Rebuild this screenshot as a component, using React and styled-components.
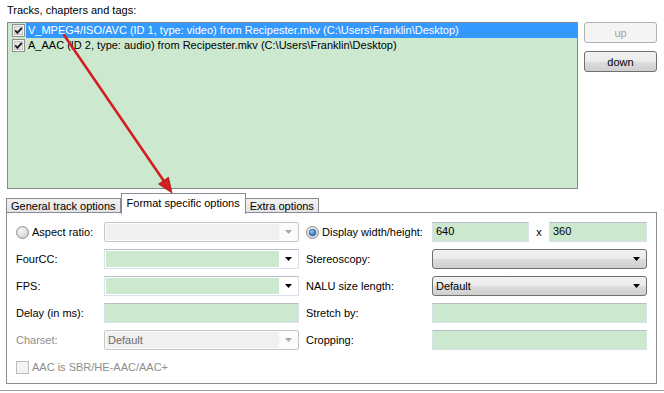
import React from "react";
import styled, { createGlobalStyle } from "styled-components";

const GlobalStyle = createGlobalStyle`
  body {
    margin: 0;
    background: #ffffff;
    font-family: "Liberation Sans", Arial, sans-serif;
    font-size: 11px;
    color: #000;
  }
`;

const tracks = [
  {
    text: "V_MPEG4/ISO/AVC (ID 1, type: video) from Recipester.mkv (C:\\Users\\Franklin\\Desktop)",
    selected: true,
  },
  {
    text: "A_AAC (ID 2, type: audio) from Recipester.mkv (C:\\Users\\Franklin\\Desktop)",
    selected: false,
  },
];

function CheckMark() {
  return (
    <svg width="13" height="13" viewBox="0 0 13 13">
      <rect x="0.5" y="0.5" width="12" height="12" fill="#f4f4f4" stroke="#8e8f8f" />
      <rect x="2.5" y="2.5" width="8" height="8" fill="#e6e6e6" stroke="#c4c4c4" />
      <path d="M3.2 6.4 L5.4 8.8 L9.8 3.8" fill="none" stroke="#1a1a1a" strokeWidth="1.8" />
    </svg>
  );
}

function DownArrow({ color = "#000" }) {
  return (
    <svg width="7" height="4" viewBox="0 0 7 4">
      <path d="M0 0 H7 L3.5 4 Z" fill={color} />
    </svg>
  );
}

function Radio({ checked }) {
  return (
    <svg width="13" height="13" viewBox="0 0 13 13">
      <defs>
        <radialGradient id={checked ? "rOn" : "rOff"} cx="0.4" cy="0.35" r="0.7">
          <stop offset="0" stopColor="#f6f6f6" />
          <stop offset="1" stopColor="#cfcfcf" />
        </radialGradient>
        <radialGradient id="dot" cx="0.4" cy="0.35" r="0.7">
          <stop offset="0" stopColor="#8fd0ff" />
          <stop offset="1" stopColor="#1b5fa8" />
        </radialGradient>
      </defs>
      <circle cx="6.5" cy="6.5" r="6" fill={`url(#${checked ? "rOn" : "rOff"})`} stroke="#8e8f8f" />
      {checked && <circle cx="6.5" cy="6.5" r="3.3" fill="url(#dot)" stroke="#1f4b7a" strokeWidth="0.6" />}
    </svg>
  );
}

function App() {
  return (
    <Page>
      <GlobalStyle />
      <Caption>Tracks, chapters and tags:</Caption>
      <TopRow>
        <TrackList>
          {tracks.map((t) => (
            <TrackRow key={t.text}>
              <CheckMark />
              <TrackText selected={t.selected}>{t.text}</TrackText>
            </TrackRow>
          ))}
        </TrackList>
        <ButtonCol>
          <PushButton disabled>up</PushButton>
          <PushButton>down</PushButton>
        </ButtonCol>
      </TopRow>

      <TabStrip>
        <Tab>General track options</Tab>
        <Tab active>Format specific options</Tab>
        <Tab>Extra options</Tab>
      </TabStrip>
      <Panel>
        <FormGrid>
          <RadioLabel>
            <Radio />
            Aspect ratio:
          </RadioLabel>
          <DisabledCombo>
            <ComboFace />
            <DownArrow color="#a8a8a8" />
          </DisabledCombo>
          <RadioLabel>
            <Radio checked />
            Display width/height:
          </RadioLabel>
          <SizePair>
            <TextField>640</TextField>
            <Times>x</Times>
            <TextField>360</TextField>
          </SizePair>

          <Label>FourCC:</Label>
          <EditCombo>
            <GreenFace />
            <DownArrow />
          </EditCombo>
          <Label>Stereoscopy:</Label>
          <DropCombo>
            <span />
            <DownArrow />
          </DropCombo>

          <Label>FPS:</Label>
          <EditCombo>
            <GreenFace />
            <DownArrow />
          </EditCombo>
          <Label>NALU size length:</Label>
          <DropCombo>
            <span>Default</span>
            <DownArrow />
          </DropCombo>

          <Label>Delay (in ms):</Label>
          <TextField width="195px" />
          <Label>Stretch by:</Label>
          <TextField />

          <Label disabled>Charset:</Label>
          <DisabledCombo>
            <ComboFace>Default</ComboFace>
            <DownArrow color="#a8a8a8" />
          </DisabledCombo>
          <Label>Cropping:</Label>
          <TextField />

          <CheckLine>
            <DisabledBox />
            AAC is SBR/HE-AAC/AAC+
          </CheckLine>
        </FormGrid>
      </Panel>
      <Separator />

      <Pointer width="664" height="393" viewBox="0 0 664 393">
        <line x1="64" y1="35" x2="163.5" y2="180.6" stroke="#d21f1f" strokeWidth="2.6" strokeLinecap="round" />
        <polygon points="172,193 158.5,184 168.5,177.2" fill="#d21f1f" stroke="#a81414" strokeWidth="0.8" />
      </Pointer>
    </Page>
  );
}

export default App;

const Page = styled.div`
  position: relative;
  width: 664px;
  height: 393px;
  overflow: hidden;
`;

const Caption = styled.div`
  padding: 4px 0 0 7px;
  height: 13px;
  line-height: 13px;
`;

const TopRow = styled.div`
  display: flex;
  margin-top: 5px;
  padding-left: 7px;
`;

const TrackList = styled.div`
  box-sizing: border-box;
  width: 571px;
  height: 167px;
  border: 1px solid #828790;
  background: #cce8cf;
`;

const TrackRow = styled.div`
  display: flex;
  align-items: center;
  height: 15px;
  padding-left: 4px;

  svg {
    flex: none;
  }
`;

const TrackText = styled.div`
  flex: 1;
  height: 15px;
  line-height: 15px;
  margin-left: 1px;
  padding-left: 2px;
  white-space: nowrap;
  background: ${(p) => (p.selected ? "#3399ff" : "transparent")};
  color: ${(p) => (p.selected ? "#ffffff" : "#000")};
`;

const ButtonCol = styled.div`
  display: flex;
  flex-direction: column;
  gap: 8px;
  margin-left: 6px;
  width: 73px;
`;

const PushButton = styled.button`
  box-sizing: border-box;
  height: 21px;
  padding: 0;
  font: inherit;
  border-radius: 3px;
  border: 1px solid ${(p) => (p.disabled ? "#adb2b5" : "#707070")};
  background: ${(p) =>
    p.disabled
      ? "#f4f4f4"
      : "linear-gradient(#f2f2f2 0%, #ebebeb 50%, #dddddd 51%, #cfcfcf 100%)"};
  color: ${(p) => (p.disabled ? "#a0a0a0" : "#000")};
`;

const TabStrip = styled.div`
  display: flex;
  align-items: flex-end;
  height: 20px;
  margin-top: 4px;
  padding-left: 6px;
  position: relative;
  z-index: 1;
`;

const Tab = styled.div`
  box-sizing: border-box;
  height: ${(p) => (p.active ? "21px" : "15px")};
  margin-bottom: ${(p) => (p.active ? "-1px" : "0")};
  padding: ${(p) => (p.active ? "2px 5px 0" : "0 4px")};
  line-height: ${(p) => (p.active ? "15px" : "14px")};
  border: 1px solid #898c95;
  border-bottom: ${(p) => (p.active ? "none" : "1px solid #898c95")};
  border-left: ${(p) => (p.active ? "1px solid #898c95" : "none")};
  background: ${(p) => (p.active ? "#ffffff" : "linear-gradient(#f2f2f2, #e3e3e3)")};
  white-space: nowrap;

  &:first-child {
    border-left: 1px solid #898c95;
  }
`;

const Panel = styled.div`
  box-sizing: border-box;
  width: 651px;
  height: 172px;
  margin-left: 6px;
  margin-top: -1px;
  border: 1px solid #898c95;
  padding: 9px 0 0 9px;
`;

const FormGrid = styled.div`
  display: grid;
  grid-template-columns: 88px 202px 126px 215px;
  grid-auto-rows: 20px;
  row-gap: 7px;
  align-items: center;
`;

const Label = styled.div`
  color: ${(p) => (p.disabled ? "#8d8d8d" : "#000")};
  white-space: nowrap;
`;

const RadioLabel = styled.div`
  display: flex;
  align-items: center;
  gap: 3px;
  white-space: nowrap;
`;

const fieldBase = `
  box-sizing: border-box;
  height: 20px;
`;

const TextField = styled.div`
  ${fieldBase}
  width: ${(p) => p.width || "100%"};
  border: 1px solid #dbe1e8;
  border-top-color: #b7bec8;
  background: #cce8cf;
  padding-left: 3px;
  line-height: 17px;
`;

const SizePair = styled.div`
  display: grid;
  grid-template-columns: 97px 20px 98px;
  align-items: center;
`;

const Times = styled.span`
  text-align: center;
`;

const EditCombo = styled.div`
  ${fieldBase}
  width: 195px;
  display: flex;
  align-items: center;
  border: 1px solid #dbe1e8;
  border-top-color: #b7bec8;
  background: #ffffff;
  padding: 1px 6px 1px 1px;
  gap: 6px;
`;

const GreenFace = styled.div`
  flex: 1;
  height: 100%;
  background: #cce8cf;
`;

const DisabledCombo = styled.div`
  ${fieldBase}
  width: 195px;
  display: flex;
  align-items: center;
  border: 1px solid #c6c6c6;
  border-radius: 2px;
  background: #fbfbfb;
  padding: 1px 6px 1px 1px;
  gap: 6px;
`;

const ComboFace = styled.div`
  flex: 1;
  height: 100%;
  background: #f0f0f0;
  color: #6d6d6d;
  padding-left: 2px;
  line-height: 16px;
`;

const DropCombo = styled.div`
  ${fieldBase}
  width: 215px;
  display: flex;
  align-items: center;
  justify-content: space-between;
  border: 1px solid #707070;
  border-radius: 3px;
  background: linear-gradient(#f2f2f2 0%, #ebebeb 50%, #dddddd 51%, #cfcfcf 100%);
  padding: 0 6px 0 3px;
`;

const CheckLine = styled.div`
  grid-column: 1 / span 2;
  display: flex;
  align-items: center;
  gap: 3px;
  color: #8d8d8d;
  height: 14px;
`;

const DisabledBox = styled.span`
  box-sizing: border-box;
  width: 13px;
  height: 13px;
  border: 1px solid #bcbcbc;
  background: #f4f4f4;
`;

const Separator = styled.div`
  margin-top: 6px;
  border-top: 1px solid #a0a0a0;
  border-bottom: 1px solid #ffffff;
`;

const Pointer = styled.svg`
  position: absolute;
  left: 0;
  top: 0;
  pointer-events: none;
  z-index: 5;
`;
